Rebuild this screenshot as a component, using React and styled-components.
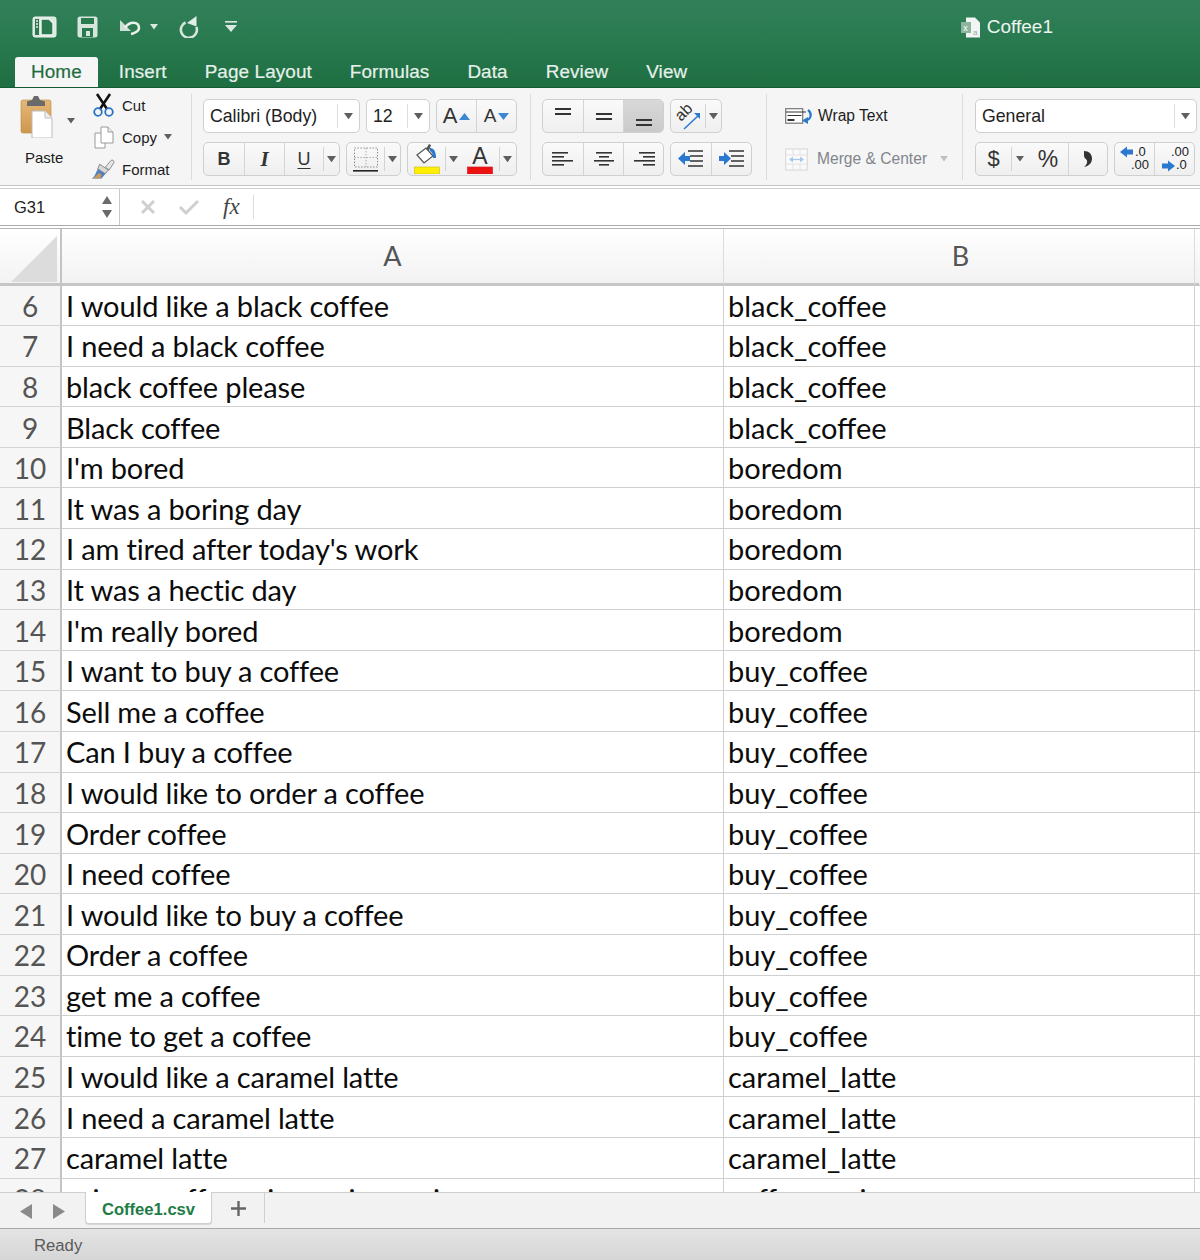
import styled, { createGlobalStyle } from "styled-components";

const GlobalStyle = createGlobalStyle`
  * { box-sizing: border-box; }
  html, body { margin: 0; padding: 0; background: #fff; }
  body { font-family: "Liberation Sans", Arial, sans-serif; }
`;

const Window = styled.div`
  width: 1200px;
  height: 1260px;
  display: flex;
  flex-direction: column;
  overflow: hidden;
`;

const TitleBar = styled.header`
  height: 88px;
  flex: none;
  display: flex;
  flex-direction: column;
  background: linear-gradient(180deg, #31805a 0%, #2a7a50 45%, #1e6e42 100%);
  border-bottom: 1px solid #145a33;
`;

const QuickRow = styled.div`
  height: 57px;
  display: flex;
  align-items: center;
  padding: 0 147px 3px 32px;
`;

const QuickIcon = styled.span`
  display: flex;
  margin-left: ${(p) => p.$gap || 0}px;
`;

const DocTitle = styled.div`
  margin-left: auto;
  display: flex;
  align-items: center;
  gap: 6px;
  color: #eef5f0;
  font-size: 19px;
`;

const Tabs = styled.nav`
  display: flex;
  align-items: flex-end;
  height: 30px;
  padding-left: 15px;
`;

const Tab = styled.div`
  height: 30px;
  padding: 0 ${(p) => (p.$active ? 16 : 19)}px;
  margin-right: ${(p) => (p.$active ? 2 : 0)}px;
  display: flex;
  align-items: center;
  font-size: 18.9px;
  letter-spacing: 0.1px;
  color: ${(p) => (p.$active ? "#1f6e42" : "#e6f0ea")};
  background: ${(p) => (p.$active ? "#f6f6f6" : "transparent")};
  border-radius: 3px 3px 0 0;
  -webkit-text-stroke: 0.2px currentColor;
`;

const Ribbon = styled.section`
  height: 98px;
  flex: none;
  display: flex;
  padding-top: 6px;
  background: #f5f5f5;
  border-bottom: 1px solid #c4c4c4;
`;

const Section = styled.div`
  width: ${(p) => p.$w}px;
  height: 86px;
  flex: none;
  padding: 5px 0 0 ${(p) => p.$pad ?? 12}px;
  border-right: ${(p) => (p.$last ? "none" : "1px solid #dcdcdc")};
  display: flex;
  flex-direction: ${(p) => (p.$row ? "row" : "column")};
  gap: 9px;
`;

const ClipSection = styled(Section)`
  gap: 0;
`;

const ToolRow = styled.div`
  display: flex;
  height: 34px;
  gap: 6px;
`;

const PasteCol = styled.div`
  width: 92px;
  margin-top: -4px;
  display: flex;
  flex-direction: column;
  padding-left: 20px;
  position: relative;
`;

const PasteLabel = styled.span`
  font-size: 15px;
  color: #1c1c1c;
  margin: 11px 0 0 5px;
`;

const CaretSpot = styled.span`
  position: absolute;
  left: 67px;
  top: 15px;
`;

const ClipList = styled.div`
  display: flex;
  flex-direction: column;
  margin-top: -10px;
`;

const ClipItem = styled.div`
  height: 32px;
  flex: none;
  display: flex;
  align-items: center;
  gap: 7px;
  font-size: 15px;
  color: #1c1c1c;
`;

const ClipIcon = styled.span`
  width: 23px;
  display: flex;
  justify-content: center;
`;

const Select = styled.div`
  width: ${(p) => p.$w}px;
  height: 34px;
  display: flex;
  align-items: center;
  padding-left: 6px;
  background: #fff;
  border: 1.5px solid #cfcfcf;
  border-radius: 5px;
  font-size: 17.7px;
  color: #222;
`;

const SelectValue = styled.span`
  flex: 1;
`;

const SelectArrow = styled.span`
  width: 22px;
  height: 24px;
  display: flex;
  align-items: center;
  justify-content: center;
  border-left: 1px solid #ddd;
`;

const Group = styled.div`
  display: flex;
  height: 34px;
  border: 1.5px solid #cfcfcf;
  border-radius: 5px;
  background: linear-gradient(180deg, #fafafa, #efefef);
  overflow: hidden;
`;

const GroupBtn = styled.div`
  width: ${(p) => p.$w}px;
  flex: none;
  display: flex;
  align-items: center;
  justify-content: center;
  color: #333;
  font-size: ${(p) => p.$size || 18}px;
  background: ${(p) => (p.$on ? "linear-gradient(180deg, #d8d8d8, #cacaca)" : "transparent")};
  & + & {
    border-left: 1px solid #d4d4d4;
  }
`;

const BoldGlyph = styled.span`
  font-weight: 700;
`;

const ItalicGlyph = styled.span`
  font-family: "Liberation Serif", serif;
  font-style: italic;
  font-weight: 700;
  font-size: 21px;
`;

const UnderGlyph = styled.span`
  text-decoration: underline;
  text-underline-offset: 3px;
`;

const GrowGlyph = styled.span`
  font-size: ${(p) => p.$size}px;
  margin-right: 2px;
`;

const ThinBtn = styled.div`
  width: ${(p) => p.$w}px;
  flex: none;
  display: flex;
  align-items: center;
  justify-content: center;
  position: relative;
  &::before {
    content: "";
    position: absolute;
    left: 0;
    top: 4px;
    bottom: 4px;
    width: 1px;
    background: #d4d4d4;
  }
`;

const WrapItem = styled.div`
  height: 34px;
  display: flex;
  align-items: center;
  gap: 5px;
  font-size: 15.6px;
  color: ${(p) => (p.$off ? "#80868c" : "#1c1c1c")};
`;

const MergeLabel = styled.span`
  margin: 0 8px 0 4px;
`;

const FormulaBar = styled.div`
  height: 38px;
  flex: none;
  margin-top: 2px;
  display: flex;
  align-items: center;
  background: #fff;
  border-top: 1px solid #d0d0d0;
  border-bottom: 1px solid #a8a8a8;
`;

const NameBox = styled.div`
  width: 120px;
  height: 100%;
  display: flex;
  align-items: center;
  justify-content: space-between;
  padding: 0 7px 0 14px;
  font-size: 16.5px;
  color: #222;
  border-right: 1.5px solid #c8c8c8;
`;

const FormulaTools = styled.div`
  display: flex;
  align-items: center;
  height: 100%;
  padding-left: 19px;
  gap: 21px;
`;

const FxLabel = styled.span`
  font-family: "Liberation Serif", serif;
  font-style: italic;
  font-size: 23px;
  color: #444;
  padding-right: 13px;
  margin-left: 2px;
  border-right: 1px solid #ddd;
  line-height: 24px;
`;

const Sheet = styled.main`
  flex: 1;
  min-height: 0;
  margin-top: 2px;
  overflow: hidden;
  border-top: 1px solid #b4b4b4;
  display: grid;
  grid-template-columns: 62px 662px 471px 5px;
  grid-auto-rows: 40.6px;
  grid-template-rows: 56.5px;
  align-content: start;
`;

const Corner = styled.div`
  background: linear-gradient(180deg, #fff, #f3f3f3);
  border-right: 2px solid #c4c4c4;
  border-bottom: 3px solid #c6c6c6;
  display: flex;
  align-items: flex-end;
  justify-content: flex-end;
  padding: 0 3px 1px 0;
`;

const ColHead = styled.div`
  background: linear-gradient(180deg, #fff, #f2f2f2);
  border-right: 1px solid ${(p) => (p.$end ? "transparent" : "#dcdcdc")};
  border-bottom: 3px solid #c6c6c6;
  display: flex;
  align-items: center;
  justify-content: center;
  padding-left: ${(p) => p.$nudge || 0}px;
  font-family: Lato, "Open Sans", sans-serif;
  font-size: 27px;
  color: #555;
`;

const RowHead = styled.div`
  background: #f6f6f6;
  border-right: 2px solid #c4c4c4;
  border-bottom: 1.5px solid #d4d4d4;
  display: flex;
  align-items: center;
  justify-content: center;
  padding-top: 1px;
  font-family: Lato, "Open Sans", sans-serif;
  font-size: 28px;
  color: #555;
`;

const Cell = styled.div`
  background: #fff;
  border-right: 1.5px solid #d0d0d0;
  border-bottom: 1.5px solid #d0d0d0;
  display: flex;
  align-items: center;
  padding-left: 4px;
  font-family: Lato, "Open Sans", sans-serif;
  font-size: 29px;
  letter-spacing: ${(p) => (p.$tight ? "-0.14px" : "0")};
  color: #0c0c0c;
  white-space: nowrap;
  overflow: hidden;
`;

const Gutter = styled.div`
  background: #fff;
  border-bottom: 1.5px solid #d0d0d0;
`;

const SheetTabs = styled.div`
  height: 37px;
  flex: none;
  display: flex;
  background: #f2f2f2;
  border-top: 1px solid #cfcfcf;
  border-bottom: 1px solid #a9a9a9;
`;

const NavArrows = styled.div`
  width: 85px;
  display: flex;
  align-items: center;
  gap: 19px;
  padding: 1px 0 0 20px;
`;

const SheetTab = styled.div`
  width: 127px;
  height: 32px;
  margin-top: -1px;
  padding-top: 4px;
  display: flex;
  align-items: center;
  justify-content: center;
  background: #fff;
  border: 1px solid #cfcfcf;
  border-top: none;
  border-radius: 0 0 4px 4px;
  box-shadow: 0 1px 1px rgba(0, 0, 0, 0.12);
  font-size: 16.6px;
  font-weight: 700;
  color: #1d7d45;
`;

const AddSheet = styled.div`
  width: 53px;
  height: 30px;
  display: flex;
  align-items: center;
  justify-content: center;
  border-right: 1px solid #cfcfcf;
`;

const StatusBar = styled.footer`
  height: 31px;
  flex: none;
  display: flex;
  align-items: center;
  padding: 2px 0 0 34px;
  background: linear-gradient(180deg, #e4e4e4, #d6d6d6);
  font-size: 16.7px;
  color: #5a5a5a;
`;

const Caret = ({ size = 9, color = "#5f5f5f" }) => (
  <svg width={size} height={size * 0.7} viewBox="0 0 10 7">
    <path d="M0 0h10L5 7z" fill={color} />
  </svg>
);

const Lines = ({ rows, color = "#333", w = 22, h = 20, t = 2 }) => (
  <svg width={w} height={h} viewBox={`0 0 ${w} ${h}`}>
    {rows.map(([x1, x2, y], i) => (
      <rect key={i} x={x1} y={y} width={x2 - x1} height={t} fill={color} />
    ))}
  </svg>
);

const PanelIcon = () => (
  <svg width="25" height="25" viewBox="0 0 25 25" fill="none">
    <rect x="1" y="2" width="23" height="20" rx="2" fill="#d9e7df" stroke="#f0f5f2" />
    <rect x="3" y="4" width="4" height="16" fill="#2a7a50" />
    <path d="M9 4h8l4 4v12H9z" fill="#2a7a50" stroke="#f0f5f2" strokeWidth="1.4" />
    <path d="M4 6h2M4 9h2M4 12h2" stroke="#e8f0ec" strokeWidth="1.4" />
  </svg>
);

const SaveIcon = () => (
  <svg width="21" height="22" viewBox="0 0 21 22">
    <rect x="0.5" y="0.5" width="20" height="21" rx="2.5" fill="#d6e6dd" />
    <rect x="4" y="2" width="13" height="6" fill="#2a7a50" />
    <rect x="5" y="12" width="11" height="9" fill="#2a7a50" />
    <rect x="9" y="15" width="4" height="5" fill="#d6e6dd" />
  </svg>
);

const UndoIcon = () => (
  <svg width="22" height="18" viewBox="0 0 22 18" fill="none">
    <path d="M1 2v11h11z" fill="#cfe1d7" />
    <path d="M6 10 C10 3 20 3 20 10 C20 14 15 15 12 16" stroke="#e8f1ec" strokeWidth="2.6" />
  </svg>
);

const RedoIcon = () => (
  <svg width="20" height="22" viewBox="0 0 20 22" fill="none">
    <path d="M6.5 6.5A8 8 0 1 0 17.4 11" stroke="#d6e6dd" strokeWidth="2.6" />
    <path d="M17.5 0v10.500L8 7z" fill="#e2eee7" />
  </svg>
);

const CustomizeIcon = () => (
  <svg width="12" height="12" viewBox="0 0 12 12">
    <rect x="0" y="0" width="12" height="1.6" fill="#dbe8e0" />
    <path d="M0 4h12l-6 7z" fill="#dbe8e0" />
  </svg>
);

const DocIcon = () => (
  <svg width="20" height="21" viewBox="0 0 20 21">
    <path d="M5 0.5h9l5 5v15H5z" fill="#f2f5f3" />
    <rect x="0" y="5" width="10" height="11" fill="#8db49e" />
    <text x="2.2" y="13.5" fontSize="9" fill="#fff" fontFamily="Liberation Sans">x</text>
    <text x="12" y="18" fontSize="8" fill="#9aa" fontFamily="Liberation Sans">a</text>
  </svg>
);

const ClipboardIcon = () => (
  <svg width="34" height="43" viewBox="0 0 34 43">
    <defs>
      <linearGradient id="board" x1="0" y1="0" x2="0" y2="1">
        <stop offset="0" stopColor="#e5b877" />
        <stop offset="1" stopColor="#cf974f" />
      </linearGradient>
    </defs>
    <rect x="1" y="5" width="30" height="33" rx="2" fill="url(#board)" stroke="#b8843f" strokeWidth="0.6" />
    <path d="M7 11V6.5L12 5l2-4h4l2 4 5 1.5V11z" fill="#6a6a6a" />
    <path d="M12 16h13l7 7v20H12z" fill="#fff" stroke="#bdbdbd" />
    <path d="M25 16v7h7" fill="#eee" stroke="#bdbdbd" />
  </svg>
);

const ScissorsIcon = () => (
  <svg width="21" height="24" viewBox="0 0 21 24" fill="none">
    <path d="M4 1l10 15M17 1L7 16" stroke="#111" strokeWidth="2.6" />
    <circle cx="5" cy="19" r="3.8" stroke="#2a72c4" strokeWidth="1.8" />
    <circle cx="16" cy="19" r="3.8" stroke="#2a72c4" strokeWidth="1.8" />
  </svg>
);

const CopyIcon = () => (
  <svg width="20" height="23" viewBox="0 0 20 23" fill="#fff" stroke="#9a9a9a">
    <path d="M1 7h9l1 1v14H1z" />
    <path d="M7 1h7l5 5v11H7z" />
    <path d="M14 1v5h5" fill="#eee" />
  </svg>
);

const BrushIcon = () => (
  <svg width="24" height="22" viewBox="0 0 24 22">
    <path d="M14 9l6-7c1-1 3 0 3 2l-5 8z" fill="#e8e8e8" stroke="#888" />
    <path d="M8 6l9 6-3 4L6 11z" fill="#d7d7d7" stroke="#888" />
    <path d="M6 11l8 5-4 5H0c3-2 4-6 6-10z" fill="#4f80bf" />
    <path d="M0 21c3-1 5-3 7-6l3 2-1 4z" fill="#c79a5d" />
  </svg>
);

const GrowIcon = ({ up, size }) => (
  <>
    <GrowGlyph $size={size}>A</GrowGlyph>
    <svg width="11" height="7" viewBox="0 0 11 7">
      <path d={up ? "M0 7h11L5.5 0z" : "M0 0h11L5.5 7z"} fill="#3c86d6" />
    </svg>
  </>
);

const BordersIcon = () => (
  <svg width="26" height="25" viewBox="0 0 26 25" fill="none">
    <rect x="1.5" y="1" width="23" height="19" stroke="#888" strokeDasharray="1.4 1.6" />
    <path d="M13 1v19M1.5 10.5h23" stroke="#aaa" strokeDasharray="1.4 1.6" />
    <rect x="0" y="23" width="25" height="1.6" fill="#222" />
  </svg>
);

const FillIcon = () => (
  <svg width="26" height="30" viewBox="0 0 26 30">
    <path d="M3 11l9-7 7 8-9 7z" fill="#fff" stroke="#555" strokeWidth="1.2" />
    <path d="M12 5l3-5 2 1-2 6" fill="#555" />
    <path d="M16 4c4 0 6 4 6 10h-3c0-4-1-6-3-7z" fill="#2a78cf" />
    <rect x="0.5" y="23" width="25" height="7" fill="#ffee00" stroke="#cfc328" strokeWidth="0.7" />
  </svg>
);

const FontColorIcon = () => (
  <svg width="26" height="30" viewBox="0 0 26 30">
    <text x="13" y="20" textAnchor="middle" fontSize="23" fill="#333" fontFamily="Liberation Sans">A</text>
    <rect x="0.5" y="23" width="25" height="7" fill="#ee1111" stroke="#c22" strokeWidth="0.7" />
  </svg>
);

const RotateIcon = () => (
  <svg width="30" height="30" viewBox="-2 -2 30 30" fill="none">
    <text transform="translate(6 19) rotate(-45)" fontSize="16" fill="#333" fontFamily="Liberation Sans">ab</text>
    <path d="M9 26L24 12" stroke="#2a78cf" strokeWidth="1.5" />
    <path d="M19 10h6v6z" fill="#2a78cf" />
  </svg>
);

const IndentIcon = ({ out }) => (
  <svg width="26" height="20" viewBox="0 0 26 20">
    <path d="M10 2h15M12 7h13M12 12h13M10 17h15" stroke="#333" strokeWidth="1.6" />
    {out ? (
      <path d="M0 9.5L7 3v4h5v5H7v4z" fill="#2a78cf" />
    ) : (
      <path d="M12 9.5L5 3v4H0v5h5v4z" fill="#2a78cf" />
    )}
  </svg>
);

const WrapIcon = () => (
  <svg width="28" height="18" viewBox="0 0 28 18" fill="none">
    <rect x="0.7" y="1.7" width="17" height="14.5" fill="#fff" stroke="#777" strokeWidth="1.2" />
    <path d="M1 5h20M2.5 8.5h14" stroke="#333" strokeWidth="1.2" />
    <rect x="2.5" y="12" width="7" height="2" fill="#333" />
    <path d="M23 3c4 3 4 9-3 11" stroke="#2a78cf" strokeWidth="2.2" />
    <path d="M23 10v7l-6-3.5z" fill="#2a78cf" />
  </svg>
);

const MergeIcon = () => (
  <svg width="23" height="23" viewBox="0 0 23 23" fill="none">
    <rect x="0.7" y="1" width="21.5" height="21" fill="#fafafa" stroke="#d5d5d5" />
    <path d="M8 1v6M15 1v6M8 16v6M15 16v6M1 7h21M1 16h21" stroke="#e2e2e2" />
    <path d="M5 11.5h13" stroke="#a9c9ea" strokeWidth="1.4" />
    <path d="M8 8.5l-4 3 4 3zM15 8.5l4 3-4 3z" fill="#a9c9ea" />
  </svg>
);

const CommaIcon = () => (
  <svg width="10" height="16" viewBox="0 0 10 16">
    <path d="M1 0c5 0 8 3 8 7.5C9 12 6 15 1 16c2.5-2 3.5-4 3-6.5C3.5 8 1 7 1 5c0-2 0-3.5 0-5z" fill="#333" />
  </svg>
);

const DecimalIcon = ({ less }) => (
  <svg width="34" height="30" viewBox="0 -2 34 30">
    <text x={less ? 17 : 13} y="10" fontSize="13" fill="#222" fontFamily="Liberation Sans">{less ? ".0" : ".00"}</text>
    <text x={less ? 13 : 18} y="23" fontSize="13" fill="#222" fontFamily="Liberation Sans">{less ? ".00" : ".0"}</text>
    {less ? (
      <path d="M2 6l7-5.5v3h6v5H9v3z" fill="#2a78cf" />
    ) : (
      <path d="M17 20l-7-5.5v3H4v5h6v3z" fill="#2a78cf" />
    )}
  </svg>
);

const Stepper = () => (
  <svg width="10" height="24" viewBox="0 0 10 24">
    <path d="M0 9L5 1l5 8zM0 15l5 8 5-8z" fill="#6a6a6a" />
  </svg>
);

const CrossIcon = () => (
  <svg width="18" height="18" viewBox="0 0 18 18">
    <path d="M3 3l12 12M15 3L3 15" stroke="#cfcfcf" strokeWidth="3" />
  </svg>
);

const CheckIcon = () => (
  <svg width="22" height="18" viewBox="0 0 22 18" fill="none">
    <path d="M2 9l6 6L20 3" stroke="#cfcfcf" strokeWidth="3" />
  </svg>
);

const Triangle = ({ dir }) => (
  <svg width="13" height="15" viewBox="0 0 13 15">
    <path d={dir === "left" ? "M12 0v15L0 7.5z" : "M1 0v15l12-7.5z"} fill="#8a8a8a" />
  </svg>
);

const rows = [
  [6, "I would like a black coffee", "black_coffee"],
  [7, "I need a black coffee", "black_coffee"],
  [8, "black coffee please", "black_coffee"],
  [9, "Black coffee", "black_coffee"],
  [10, "I'm bored", "boredom"],
  [11, "It was a boring day", "boredom"],
  [12, "I am tired after today's work", "boredom"],
  [13, "It was a hectic day", "boredom"],
  [14, "I'm really bored", "boredom"],
  [15, "I want to buy a coffee", "buy_coffee"],
  [16, "Sell me a coffee", "buy_coffee"],
  [17, "Can I buy a coffee", "buy_coffee"],
  [18, "I would like to order a coffee", "buy_coffee"],
  [19, "Order coffee", "buy_coffee"],
  [20, "I need coffee", "buy_coffee"],
  [21, "I would like to buy a coffee", "buy_coffee"],
  [22, "Order a coffee", "buy_coffee"],
  [23, "get me a coffee", "buy_coffee"],
  [24, "time to get a coffee", "buy_coffee"],
  [25, "I would like a caramel latte", "caramel_latte"],
  [26, "I need a caramel latte", "caramel_latte"],
  [27, "caramel latte", "caramel_latte"],
  [28, "price a coffee mix serving on ice", "coffee_recipe"],
];

function Row({ n, text, intent }) {
  return (
    <>
      <RowHead>{n}</RowHead>
      <Cell $tight>{text}</Cell>
      <Cell>{intent}</Cell>
      <Gutter />
    </>
  );
}

export default function App() {
  return (
    <Window>
      <GlobalStyle />
      <TitleBar>
        <QuickRow>
          <QuickIcon><PanelIcon /></QuickIcon>
          <QuickIcon $gap={20}><SaveIcon /></QuickIcon>
          <QuickIcon $gap={21}><UndoIcon /></QuickIcon>
          <QuickIcon $gap={9}><Caret size={8} color="#dbe8e0" /></QuickIcon>
          <QuickIcon $gap={21}><RedoIcon /></QuickIcon>
          <QuickIcon $gap={26}><CustomizeIcon /></QuickIcon>
          <DocTitle><DocIcon />Coffee1</DocTitle>
        </QuickRow>
        <Tabs>
          <Tab $active>Home</Tab>
          <Tab>Insert</Tab>
          <Tab>Page Layout</Tab>
          <Tab>Formulas</Tab>
          <Tab>Data</Tab>
          <Tab>Review</Tab>
          <Tab>View</Tab>
        </Tabs>
      </TitleBar>

      <Ribbon>
        <ClipSection $w={192} $pad={0} $row>
          <PasteCol>
            <ClipboardIcon />
            <PasteLabel>Paste</PasteLabel>
            <CaretSpot><Caret size={8} /></CaretSpot>
          </PasteCol>
          <ClipList>
            <ClipItem><ClipIcon><ScissorsIcon /></ClipIcon>Cut</ClipItem>
            <ClipItem><ClipIcon><CopyIcon /></ClipIcon>Copy<Caret size={8} /></ClipItem>
            <ClipItem><ClipIcon><BrushIcon /></ClipIcon>Format</ClipItem>
          </ClipList>
        </ClipSection>

        <Section $w={339} $pad={11}>
          <ToolRow>
            <Select $w={157}><SelectValue>Calibri (Body)</SelectValue><SelectArrow><Caret /></SelectArrow></Select>
            <Select $w={64}><SelectValue>12</SelectValue><SelectArrow><Caret /></SelectArrow></Select>
            <Group>
              <GroupBtn $w={39}><GrowIcon up size={22} /></GroupBtn>
              <GroupBtn $w={40}><GrowIcon size={19} /></GroupBtn>
            </Group>
          </ToolRow>
          <ToolRow>
            <Group>
              <GroupBtn $w={40}><BoldGlyph>B</BoldGlyph></GroupBtn>
              <GroupBtn $w={40}><ItalicGlyph>I</ItalicGlyph></GroupBtn>
              <GroupBtn $w={39}><UnderGlyph>U</UnderGlyph></GroupBtn>
              <ThinBtn $w={16}><Caret /></ThinBtn>
            </Group>
            <Group>
              <GroupBtn $w={37}><BordersIcon /></GroupBtn>
              <ThinBtn $w={16}><Caret /></ThinBtn>
            </Group>
            <Group>
              <GroupBtn $w={37}><FillIcon /></GroupBtn>
              <ThinBtn $w={16}><Caret /></ThinBtn>
              <GroupBtn $w={38}><FontColorIcon /></GroupBtn>
              <ThinBtn $w={17}><Caret /></ThinBtn>
            </Group>
          </ToolRow>
        </Section>

        <Section $w={236} $pad={11}>
          <ToolRow>
            <Group>
              <GroupBtn $w={40}><Lines rows={[[3, 19, 2], [3, 19, 7]]} /></GroupBtn>
              <GroupBtn $w={40}><Lines rows={[[3, 19, 7], [3, 19, 12]]} /></GroupBtn>
              <GroupBtn $w={40} $on><Lines rows={[[3, 19, 13], [3, 19, 18]]} /></GroupBtn>
            </Group>
            <Group>
              <GroupBtn $w={34}><RotateIcon /></GroupBtn>
              <ThinBtn $w={16}><Caret /></ThinBtn>
            </Group>
          </ToolRow>
          <ToolRow>
            <Group>
              <GroupBtn $w={40}><Lines rows={[[0, 16, 3], [0, 12, 7], [0, 21, 11], [0, 12, 15]]} t={1.6} /></GroupBtn>
              <GroupBtn $w={40}><Lines rows={[[3, 19, 3], [6, 16, 7], [1, 21, 11], [6, 16, 15]]} t={1.6} /></GroupBtn>
              <GroupBtn $w={40}><Lines rows={[[6, 22, 3], [10, 22, 7], [1, 22, 11], [10, 22, 15]]} t={1.6} /></GroupBtn>
            </Group>
            <Group>
              <GroupBtn $w={40}><IndentIcon out /></GroupBtn>
              <GroupBtn $w={40}><IndentIcon /></GroupBtn>
            </Group>
          </ToolRow>
        </Section>

        <Section $w={196} $pad={18}>
          <WrapItem><WrapIcon />Wrap Text</WrapItem>
          <WrapItem $off><MergeIcon /><MergeLabel>Merge &amp; Center</MergeLabel><Caret size={8} color="#c0c0c0" /></WrapItem>
        </Section>

        <Section $w={237} $pad={12} $last>
          <ToolRow>
            <Select $w={222}><SelectValue>General</SelectValue><SelectArrow><Caret /></SelectArrow></Select>
          </ToolRow>
          <ToolRow>
            <Group>
              <GroupBtn $w={35} $size={22}>$</GroupBtn>
              <ThinBtn $w={17}><Caret size={8} /></ThinBtn>
              <GroupBtn $w={40} $size={23}>%</GroupBtn>
              <GroupBtn $w={39}><CommaIcon /></GroupBtn>
            </Group>
            <Group>
              <GroupBtn $w={39}><DecimalIcon less /></GroupBtn>
              <GroupBtn $w={40}><DecimalIcon /></GroupBtn>
            </Group>
          </ToolRow>
        </Section>
      </Ribbon>

      <FormulaBar>
        <NameBox>G31<Stepper /></NameBox>
        <FormulaTools>
          <CrossIcon />
          <CheckIcon />
          <FxLabel>fx</FxLabel>
        </FormulaTools>
      </FormulaBar>

      <Sheet>
        <Corner>
          <svg width="46" height="46" viewBox="0 0 46 46">
            <path d="M46 0v46H0z" fill="#dcdcdc" />
          </svg>
        </Corner>
        <ColHead>A</ColHead>
        <ColHead $nudge={3}>B</ColHead>
        <ColHead $end />
        {rows.map(([n, text, intent]) => (
          <Row key={n} n={n} text={text} intent={intent} />
        ))}
      </Sheet>

      <SheetTabs>
        <NavArrows>
          <Triangle dir="left" />
          <Triangle dir="right" />
        </NavArrows>
        <SheetTab>Coffee1.csv</SheetTab>
        <AddSheet>
          <svg width="15" height="15" viewBox="0 0 15 15">
            <path d="M7.5 0v15M0 7.5h15" stroke="#666" strokeWidth="2.4" />
          </svg>
        </AddSheet>
      </SheetTabs>
      <StatusBar>Ready</StatusBar>
    </Window>
  );
}
